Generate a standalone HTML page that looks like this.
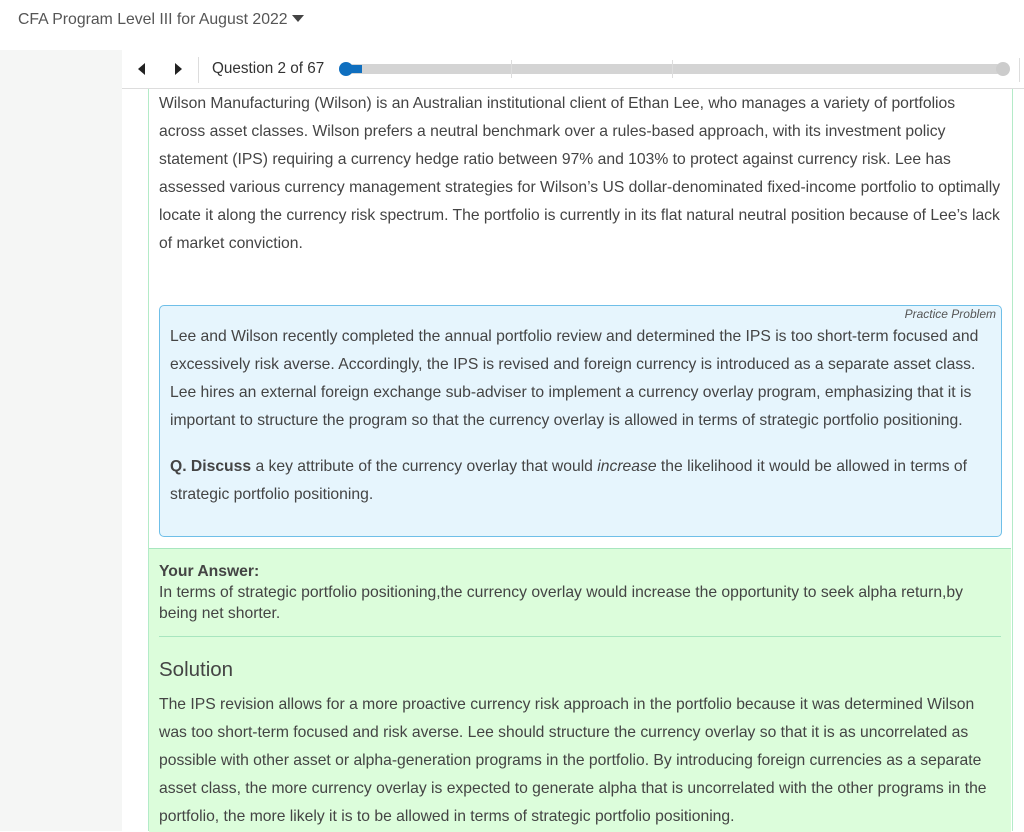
<!DOCTYPE html>
<html><head><style>
body{margin:0;width:1024px;height:831px;overflow:hidden;background:#fff;font-family:"Liberation Sans",sans-serif;color:#444;font-size:15.7px;position:relative}
.abs{position:absolute}
.hdr{left:18px;top:11px;font-size:15.8px;color:#555}
.side{left:0;top:50px;width:122px;height:781px;background:#f5f6f5}
.nav{left:122px;top:50px;width:902px;height:38px;border-bottom:1px solid #ddd}
.col{left:148px;top:89px;width:863px;height:742px;border-left:1.5px solid #b4ebc8;border-right:1.5px solid #b4ebc8}
p{margin:0}
.nw{white-space:nowrap}
.q{left:159px;top:90px;width:850px;line-height:28px}
.box{left:159px;top:305px;width:841px;height:230px;background:#e6f5fd;border:1.5px solid #6fbfe8;border-radius:5px}
.green{left:149px;top:548px;width:862px;height:283px;background:#dcfddb;border-top:1px solid #a8e6bf}
</style></head><body>
<div class="abs hdr">CFA Program Level III for August 2022 <span style="display:inline-block;width:0;height:0;border-left:6px solid transparent;border-right:6px solid transparent;border-top:7px solid #444;vertical-align:2px"></span></div>
<div class="abs side"></div>
<div class="abs nav"></div>
<div class="abs" style="left:138px;top:63px;width:0;height:0;border-top:6px solid transparent;border-bottom:6px solid transparent;border-right:7px solid #222"></div>
<div class="abs" style="left:175px;top:63px;width:0;height:0;border-top:6px solid transparent;border-bottom:6px solid transparent;border-left:7px solid #222"></div>
<div class="abs" style="left:198px;top:57px;width:1px;height:26px;background:#ddd"></div>
<div class="abs" style="left:212px;top:60px;font-size:15.3px;color:#333">Question 2 of 67</div>
<div class="abs" style="left:342px;top:64px;width:660px;height:10px;background:#d4d4d4;border-radius:5px"></div>
<div class="abs" style="left:511px;top:60px;width:1px;height:18px;background:#ddd"></div>
<div class="abs" style="left:672px;top:60px;width:1px;height:18px;background:#ddd"></div>
<div class="abs" style="left:996px;top:62px;width:14px;height:14px;border-radius:7px;background:#ccc"></div>
<div class="abs" style="left:1019px;top:58px;width:1px;height:24px;background:#ddd"></div>
<div class="abs" style="left:339px;top:62px;width:14px;height:14px;border-radius:7px;background:#0f6fbf"></div>
<div class="abs" style="left:346px;top:65px;width:16px;height:8px;background:#0f6fbf"></div>
<div class="abs col"></div>
<div class="abs q nw">Wilson Manufacturing (Wilson) is an Australian institutional client of Ethan Lee, who manages a variety of portfolios<br>across asset classes. Wilson prefers a neutral benchmark over a rules-based approach, with its investment policy<br>statement (IPS) requiring a currency hedge ratio between 97% and 103% to protect against currency risk. Lee has<br>assessed various currency management strategies for Wilson’s US dollar-denominated fixed-income portfolio to optimally<br>locate it along the currency risk spectrum. The portfolio is currently in its flat natural neutral position because of Lee’s lack<br>of market conviction.</div>
<div class="abs box">
<div style="position:absolute;right:5px;top:1px;font-size:12px;font-style:italic;color:#555">Practice Problem</div>
<div class="nw" style="position:absolute;left:10px;top:17px;width:825px;line-height:28px">Lee and Wilson recently completed the annual portfolio review and determined the IPS is too short-term focused and<br>excessively risk averse. Accordingly, the IPS is revised and foreign currency is introduced as a separate asset class.<br>Lee hires an external foreign exchange sub-adviser to implement a currency overlay program, emphasizing that it is<br>important to structure the program so that the currency overlay is allowed in terms of strategic portfolio positioning.<p style="margin-top:18px"><b>Q. Discuss</b> a key attribute of the currency overlay that would <i>increase</i> the likelihood it would be allowed in terms of<br>strategic portfolio positioning.</p></div>
</div>
<div class="abs green">
<div class="nw" style="position:absolute;left:10px;top:12px;width:840px;line-height:21px"><b>Your Answer:</b><br>In terms of strategic portfolio positioning,the currency overlay would increase the opportunity to seek alpha return,by<br>being net shorter.</div>
<div style="position:absolute;left:10px;top:87px;width:842px;height:1px;background:#a8e6bf"></div>
<div style="position:absolute;left:10px;top:109px;font-size:20.5px;color:#444">Solution</div>
<div class="nw" style="position:absolute;left:10px;top:142px;width:842px;line-height:28px">The IPS revision allows for a more proactive currency risk approach in the portfolio because it was determined Wilson<br>was too short-term focused and risk averse. Lee should structure the currency overlay so that it is as uncorrelated as<br>possible with other asset or alpha-generation programs in the portfolio. By introducing foreign currencies as a separate<br>asset class, the more currency overlay is expected to generate alpha that is uncorrelated with the other programs in the<br>portfolio, the more likely it is to be allowed in terms of strategic portfolio positioning.</div>
</div>
</body></html>
